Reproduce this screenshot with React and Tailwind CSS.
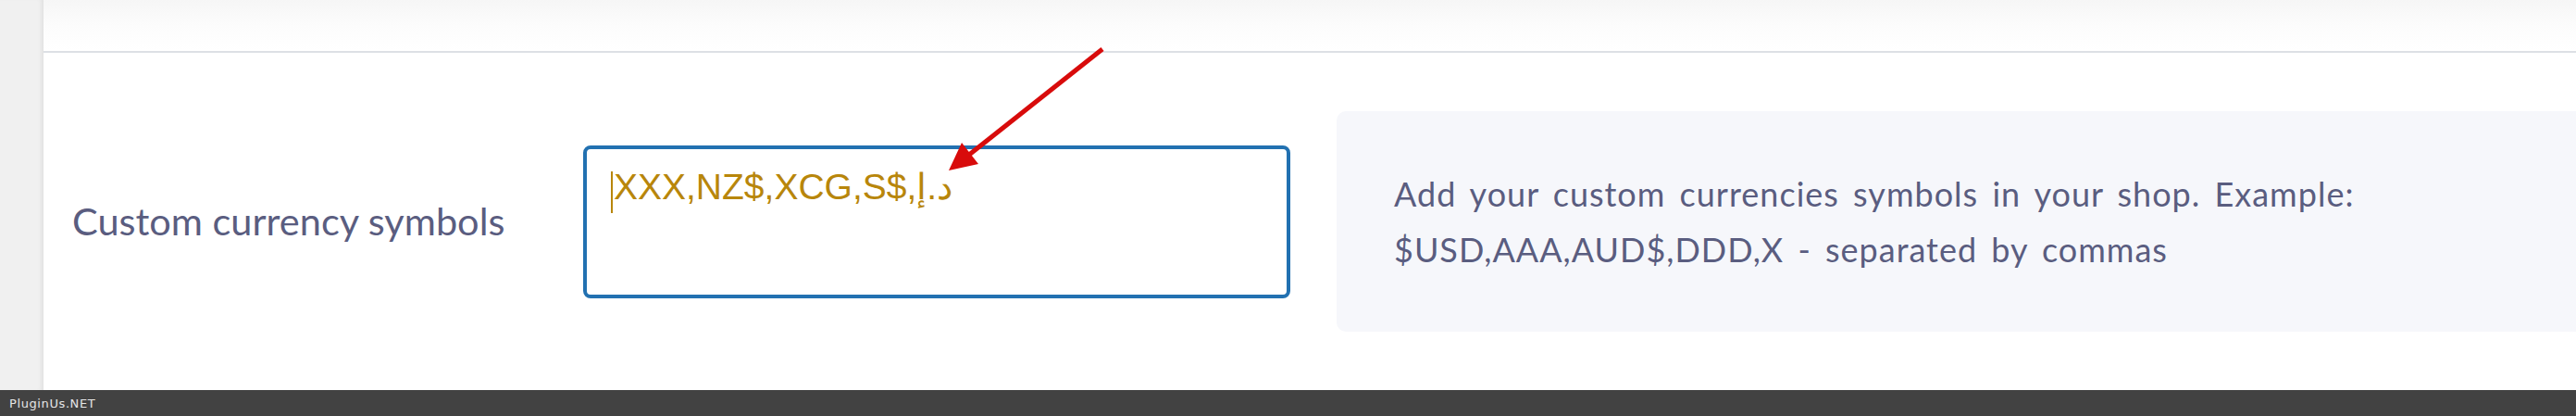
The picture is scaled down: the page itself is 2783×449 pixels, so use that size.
export default function App() {
  return (
    <div className="relative w-[2783px] h-[449px] flex flex-col overflow-hidden bg-white">
      <div className="flex flex-1 min-h-0">
        <aside className="w-[47px] shrink-0 bg-[#f0f0f0] shadow-[inset_-5px_0_5px_-3px_rgba(0,0,0,0.07)]" />
        <main className="flex-1 min-w-0 flex flex-col">
          <div className="h-[55px] shrink-0 bg-gradient-to-b from-[#f6f6f6] via-[#fcfcfc] to-white" />
          <div className="h-[2px] shrink-0 bg-[#dde0e5]" />
          <div className="flex-1 flex items-center pl-[31px]">
            <div className="w-[552px] shrink-0 font-['Lato',sans-serif] text-[41.5px] text-[#5a5d80] leading-none">
              Custom currency symbols
            </div>
            <div className="w-[764px] h-[165px] shrink-0 rounded-[8px] border-4 border-[#2271b1] bg-white pl-[26px] pt-[17px]">
              <div className="flex items-start">
                <span className="mt-[7px] h-[45px] w-[2px] bg-[#b8860b] shrink-0" />
                <span className="ml-[1px] font-['Liberation_Sans',Arial,sans-serif] text-[39px] leading-[47px] text-[#b8860b] whitespace-nowrap">
                  XXX,NZ$,XCG,S$,د.إ
                </span>
              </div>
            </div>
            <div className="ml-[50px] w-[1500px] h-[238px] shrink-0 rounded-l-[10px] bg-[#f6f7fb] pl-[62px] flex items-center">
              <p className="font-['Lato',sans-serif] text-[36px] leading-[60px] tracking-[1px] [word-spacing:5px] text-[#5a5d80] whitespace-nowrap">
                Add your custom currencies symbols in your shop. Example:
                <br />
                $USD,AAA,AUD$,DDD,X - separated by commas
              </p>
            </div>
          </div>
        </main>
      </div>
      <footer className="h-[28px] shrink-0 bg-[#424242] flex items-center pl-[10px]">
        <span className="font-['DejaVu_Sans',sans-serif] text-[13px] tracking-[0.6px] text-[#e6e6e6] leading-none">
          PluginUs.NET
        </span>
      </footer>
      <svg
        className="absolute left-0 top-0 pointer-events-none"
        width="2783"
        height="449"
        viewBox="0 0 2783 449"
      >
        <line x1="1191" y1="53" x2="1047" y2="167" stroke="#d80b0b" strokeWidth="5" />
        <polygon points="1025,184 1039,154 1057,177" fill="#d80b0b" />
      </svg>
    </div>
  );
}
